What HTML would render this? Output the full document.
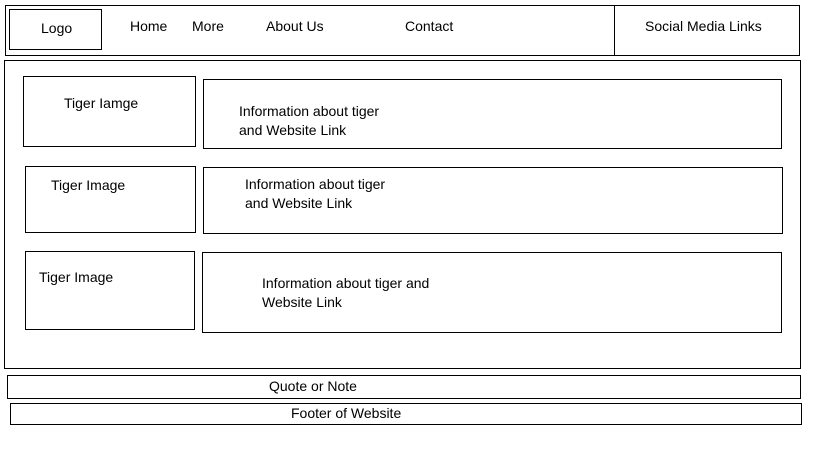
<!DOCTYPE html>
<html><head><meta charset="utf-8"><style>
html,body{margin:0;padding:0;background:#fff;width:819px;height:460px;overflow:hidden}
div{position:absolute;box-sizing:border-box}
.b{border:1px solid #000}
.t{font-family:"Liberation Sans",sans-serif;font-size:14px;color:#000;line-height:19px;white-space:nowrap}
</style></head><body>
<div class="b" style="left:5px;top:5px;width:795px;height:51px"></div>
<div class="b" style="left:9px;top:9px;width:93px;height:41px"></div>
<div style="left:614px;top:5px;width:1px;height:51px;background:#000"></div>
<div class="t" style="left:41px;top:19px">Logo</div>
<div class="t" style="left:130px;top:17px">Home</div>
<div class="t" style="left:192px;top:17px">More</div>
<div class="t" style="left:266px;top:17px">About Us</div>
<div class="t" style="left:405px;top:17px">Contact</div>
<div class="t" style="left:645px;top:17px">Social Media Links</div>

<div class="b" style="left:4px;top:60px;width:797px;height:309px"></div>

<div class="b" style="left:23px;top:76px;width:173px;height:71px"></div>
<div class="t" style="left:64px;top:94px">Tiger Iamge</div>
<div class="b" style="left:203px;top:79px;width:579px;height:70px"></div>
<div class="t" style="left:239px;top:102px">Information about tiger<br>and Website Link</div>

<div class="b" style="left:25px;top:166px;width:171px;height:67px"></div>
<div class="t" style="left:51px;top:176px">Tiger Image</div>
<div class="b" style="left:203px;top:167px;width:580px;height:67px"></div>
<div class="t" style="left:245px;top:175px">Information about tiger<br>and Website Link</div>

<div class="b" style="left:25px;top:251px;width:170px;height:79px"></div>
<div class="t" style="left:39px;top:268px">Tiger Image</div>
<div class="b" style="left:202px;top:252px;width:580px;height:81px"></div>
<div class="t" style="left:262px;top:274px">Information about tiger and<br>Website Link</div>

<div class="b" style="left:7px;top:375px;width:794px;height:24px"></div>
<div class="t" style="left:269px;top:377px">Quote or Note</div>
<div class="b" style="left:10px;top:403px;width:792px;height:22px"></div>
<div class="t" style="left:291px;top:404px">Footer of Website</div>
</body></html>
